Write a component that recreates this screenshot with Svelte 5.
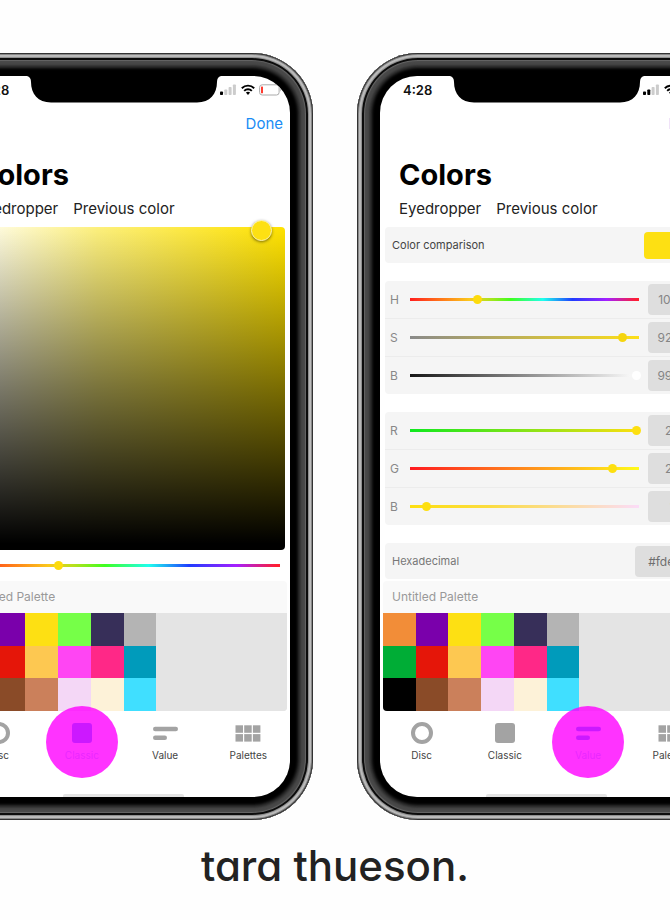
<script>
  const swatches = [
    '#f28d38', '#7a00ab', '#fde013', '#76ff48', '#372f59', '#b4b4b4', '', '', '', '',
    '#00ad36', '#e51609', '#fdc851', '#ff45f3', '#ff2887', '#009bbb', '', '', '', '',
    '#000000', '#8a4b28', '#cb805b', '#f4d7f6', '#fdf2d8', '#40dfff', '', '', '', ''
  ];

  const hue =
    'linear-gradient(90deg, #ff1e1e 0%, #ff7a1a 14%, #fbc81c 26%, #b8e01c 34%, #3fff1f 44%, #1fffee 58%, #1f3cff 71%, #a51fff 86%, #ff1e30 99%)';

  const groups = [
    [
      { id: 'h', label: 'H', name: 'Hue', pos: 28.8, value: '103.5°', track: hue, thumb: '#fddb0c' },
      { id: 's', label: 'S', name: 'Saturation', pos: 93.7, value: '92.5%', track: 'linear-gradient(90deg, #8a8a8a, #fddf18)', thumb: '#f5d50f' },
      { id: 'v', label: 'B', name: 'Brightness', pos: 100, value: '99.2%', track: 'linear-gradient(90deg, #161616, #f6f6f6 96%)', thumb: '#ffffff' }
    ],
    [
      { id: 'r', label: 'R', name: 'Red', pos: 100, value: '253', track: 'linear-gradient(90deg, #0fe81f, #fddf10)', thumb: '#fddf10' },
      { id: 'g', label: 'G', name: 'Green', pos: 89.2, value: '222', track: 'linear-gradient(90deg, #ff1a20, #fffb1a)', thumb: '#fddf10' },
      { id: 'b', label: 'B', name: 'Blue', pos: 6.2, value: '18', track: 'linear-gradient(90deg, #fddf10, #fbdc40 35%, #fbdcf8)', thumb: '#fddf10' }
    ]
  ];

  const tabs = ['Disc', 'Classic', 'Value', 'Palettes'];

  const phones = [
    { view: 'Classic', bars: 1 },
    { view: 'Value', bars: 2 }
  ];
</script>

<main>
  <div class="phones">
    {#each phones as phone}
      <section class="phone" aria-label="{phone.view} color picker">
        <div class="screen">
          <svg class="notch" viewBox="0 0 194 27" aria-hidden="true">
            <path d="M0 0H194Q190 1 190 6C190 18 183 26.500 170 26.500H24C11 26.500 4 18 4 6Q4 1 0 0Z" />
          </svg>
          <header class="status">
            <span class="time">4:28</span>
            <span class="indicators">
              <svg width="17" height="12" viewBox="0 0 17 12" aria-hidden="true">
                {#each [3.5, 5.5, 8, 10.5] as h, i}
                  <rect x={i * 4.3} y={11 - h} width="3" height={h} rx="0.8" fill={i < phone.bars ? '#000' : '#ccc'} />
                {/each}
              </svg>
              <svg width="14" height="12" viewBox="0 0 14 12" aria-hidden="true">
                <g fill="none" stroke="#000" stroke-width="1.900">
                  <path d="M.8 4.200C4.300 .8 9.700 .8 13.200 4.200" />
                  <path d="M3.200 6.800C5.300 4.700 8.700 4.700 10.800 6.800" />
                </g>
                <path d="M4.900 8.600Q7 6.900 9.100 8.600L7 10.900Z" />
              </svg>
              <svg width="23" height="12" viewBox="0 0 23 12" aria-hidden="true">
                <rect x=".6" y=".8" width="19.500" height="10.200" rx="2.600" fill="none" stroke="#aaa" stroke-width="1" />
                <rect x="2" y="2.500" width="2" height="6.800" rx=".6" fill="#ff3b30" />
                <path d="M21.200 4Q23 5.900 21.200 7.800Z" fill="#aaa" />
              </svg>
            </span>
          </header>
          <nav class="bar"><button class="done">Done</button></nav>
          <h1>Colors</h1>
          <div class="links">
            <button>Eyedropper</button>
            <button>Previous color</button>
          </div>

          {#if phone.view === 'Classic'}
            <div class="field"><span class="picker"></span></div>
            <div class="hue">
              <input type="range" aria-label="Hue" value="29" style:--track={hue} style:--thumb="#fddb0c" />
            </div>
          {:else}
            <div class="card single comparison">
              <span>Color comparison</span>
              <span class="chip"></span>
            </div>
            {#each groups as group}
              <div class="card">
                {#each group as s}
                  <div class="row">
                    <label for={s.id}>{s.label}</label>
                    <input id={s.id} type="range" step="0.1" value={s.pos} style:--track={s.track} style:--thumb={s.thumb} />
                    <input class="amount" type="text" aria-label="{s.name} value" value={s.value} />
                  </div>
                {/each}
              </div>
            {/each}
            <div class="card single hex">
              <label for="hex">Hexadecimal</label>
              <input id="hex" class="amount" type="text" value="#fde112" />
            </div>
          {/if}

          <div class="palette">
            <h2>Untitled Palette</h2>
            <div class="swatches">
              {#each swatches as color, i}
                <button aria-label={color ? `Swatch ${i + 1}` : 'Empty swatch'} style:background={color || '#e4e4e4'}></button>
              {/each}
            </div>
          </div>

          <nav class="tabs">
            {#each tabs as tab}
              <button class={{ active: tab === phone.view }}>
                <svg width="26" height="24" viewBox="0 0 26 24" aria-hidden="true">
                  {#if tab === 'Disc'}
                    <circle cx="13" cy="12" r="9" fill="none" stroke="currentColor" stroke-width="4" />
                  {:else if tab === 'Classic'}
                    <rect x="3" y="2" width="20" height="20" rx="3" fill="currentColor" />
                  {:else if tab === 'Value'}
                    <rect x="1" y="5.700" width="25" height="4.500" rx="2.200" fill="currentColor" />
                    <rect x="1" y="14.500" width="14" height="4.500" rx="2.200" fill="currentColor" />
                  {:else}
                    {#each [0, 1, 2, 3, 4, 5] as n}
                      <rect x={0.5 + (n % 3) * 8.7} y={4.3 + Math.floor(n / 3) * 8.8} width="7.500" height="7.500" fill="currentColor" />
                    {/each}
                  {/if}
                </svg>
                <span>{tab}</span>
              </button>
            {/each}
          </nav>
          <div class="home"></div>
        </div>
      </section>
    {/each}
  </div>
  <p class="signature">tara thueson.</p>
</main>

<style>
  :global(body) {
    margin: 0;
    background: #fefefe;
  }

  main {
    overflow: hidden;
    padding: 53px 0 24px;
    font-family: Inter, 'Liberation Sans', sans-serif;
    color: #222;
  }

  button,
  input {
    margin: 0;
    padding: 0;
    border: 0;
    background: none;
    font: inherit;
    color: inherit;
  }

  h1,
  h2,
  p {
    margin: 0;
  }

  .phones {
    display: flex;
    justify-content: center;
    gap: 44px;
  }

  .phone {
    flex: none;
    box-sizing: border-box;
    width: 379px;
    padding: 23px;
    border-radius: 61px;
    background: #000;
    box-shadow:
      inset 0 0 0 1px #333,
      inset 0 0 0 2px #888,
      inset 0 0 1px 4px #bdbdbd,
      inset 0 0 0 5px #8a8a8a,
      inset 0 0 0 7px #0c0c0c,
      inset 0 0 1px 8px #666,
      inset 0 0 2px 12px #484848,
      inset 0 0 3px 15px #333;
  }

  .screen {
    position: relative;
    overflow: hidden;
    border-radius: 37px;
    background: #fff;
  }

  .notch {
    position: absolute;
    top: 0;
    left: 50%;
    width: 194px;
    height: 27px;
    margin-left: -97px;
  }

  .status {
    display: flex;
    align-items: center;
    justify-content: space-between;
    height: 28px;
    padding: 0 8px 0 23px;
  }

  .time {
    font-size: 13px;
    font-weight: 600;
    color: #111;
  }

  .indicators {
    display: flex;
    gap: 4px;
  }

  .bar {
    display: flex;
    align-items: center;
    justify-content: flex-end;
    height: 38px;
    padding-right: 7px;
  }

  .done {
    font-size: 15px;
    color: #1a8cf5;
  }

  h1 {
    margin-top: 14px;
    padding-left: 19px;
    font-size: 29px;
    line-height: 38px;
    font-weight: 700;
    color: #000;
  }

  .links {
    display: flex;
    gap: 15px;
    height: 33px;
    padding-left: 19px;
    font-size: 15px;
    line-height: 30px;
  }

  .links button {
    height: 30px;
  }

  .field {
    position: relative;
    height: 323px;
    margin: 0 5px;
    border-radius: 4px;
    background:
      linear-gradient(180deg, transparent, rgb(0 0 0 / 52%) 50%, #000 98%),
      linear-gradient(90deg, #fff, #fdf07c 42%, #ffe200);
  }

  .picker {
    position: absolute;
    top: -7px;
    right: 13px;
    width: 19px;
    height: 19px;
    border: 1px solid #fff6b0;
    border-radius: 50%;
    background: #fde013;
    box-shadow: 0 1px 3px rgb(0 0 0 / 50%);
  }

  .hue {
    display: flex;
    align-items: center;
    height: 31px;
    padding: 0 8px;
  }

  input[type='range'] {
    flex: 1;
    min-width: 0;
    height: 15px;
    appearance: none;
    background: var(--track) center / calc(100% - 4px) 3px no-repeat;
  }

  input[type='range']::-webkit-slider-thumb {
    appearance: none;
    width: 9px;
    height: 9px;
    border-radius: 50%;
    background: var(--thumb);
  }

  .card {
    margin: 0 5px 18px;
    border-radius: 4px;
    background: #f5f5f5;
    font-size: 12px;
    color: #888;
  }

  .row {
    display: flex;
    align-items: center;
    height: 37px;
    padding: 0 4px 0 5px;
  }

  .row + .row {
    border-top: 1px solid #ececec;
  }

  .row label {
    width: 18px;
  }

  .amount {
    box-sizing: border-box;
    width: 56px;
    height: 31px;
    border-radius: 4px;
    background: #dedede;
    font-size: 12px;
    text-align: center;
    color: #858585;
  }

  .row .amount {
    margin-left: 7px;
  }

  .single {
    display: flex;
    align-items: center;
    justify-content: space-between;
    height: 36px;
    padding: 0 4px 0 7px;
    font-size: 11px;
  }

  .comparison {
    color: #444;
  }

  .chip {
    width: 60px;
    height: 27px;
    border-radius: 4px;
    background: #fde013;
  }

  .hex {
    margin-bottom: 2px;
    color: #777;
  }

  .hex .amount {
    width: 69px;
    color: #6e6e6e;
  }

  .palette {
    overflow: hidden;
    margin: 0 3px;
    border-radius: 4px;
    background: #f9f9f9;
  }

  h2 {
    padding-left: 9px;
    font-size: 12px;
    line-height: 32px;
    font-weight: 400;
    color: #999;
  }

  .swatches {
    display: grid;
    grid-template-columns: repeat(10, 1fr);
    grid-template-rows: repeat(3, 1fr);
    height: 98px;
    background: #e4e4e4;
  }

  .tabs {
    display: grid;
    grid-template-columns: repeat(4, 1fr);
    height: 83px;
  }

  .tabs button {
    position: relative;
    display: flex;
    flex-direction: column;
    align-items: center;
    gap: 3px;
    padding-top: 10px;
    font-size: 10px;
    line-height: 14px;
    color: #444;
  }

  .tabs svg {
    color: #a3a3a3;
  }

  .tabs .active {
    color: #8cc3ff;
  }

  .tabs .active svg {
    color: #007aff;
  }

  .active::after {
    content: '';
    position: absolute;
    top: -5px;
    left: 50%;
    width: 72px;
    height: 72px;
    border-radius: 50%;
    background: rgb(255 0 255 / 80%);
    transform: translateX(-50%);
  }

  .home {
    width: 121px;
    height: 3px;
    margin: 0 auto;
    border-radius: 2px 2px 0 0;
    background: #e4e4e4;
  }

  .signature {
    margin-top: 20px;
    font-size: 42px;
    line-height: 52px;
    font-weight: 500;
    font-feature-settings: 'cv11';
    text-align: center;
  }
</style>
